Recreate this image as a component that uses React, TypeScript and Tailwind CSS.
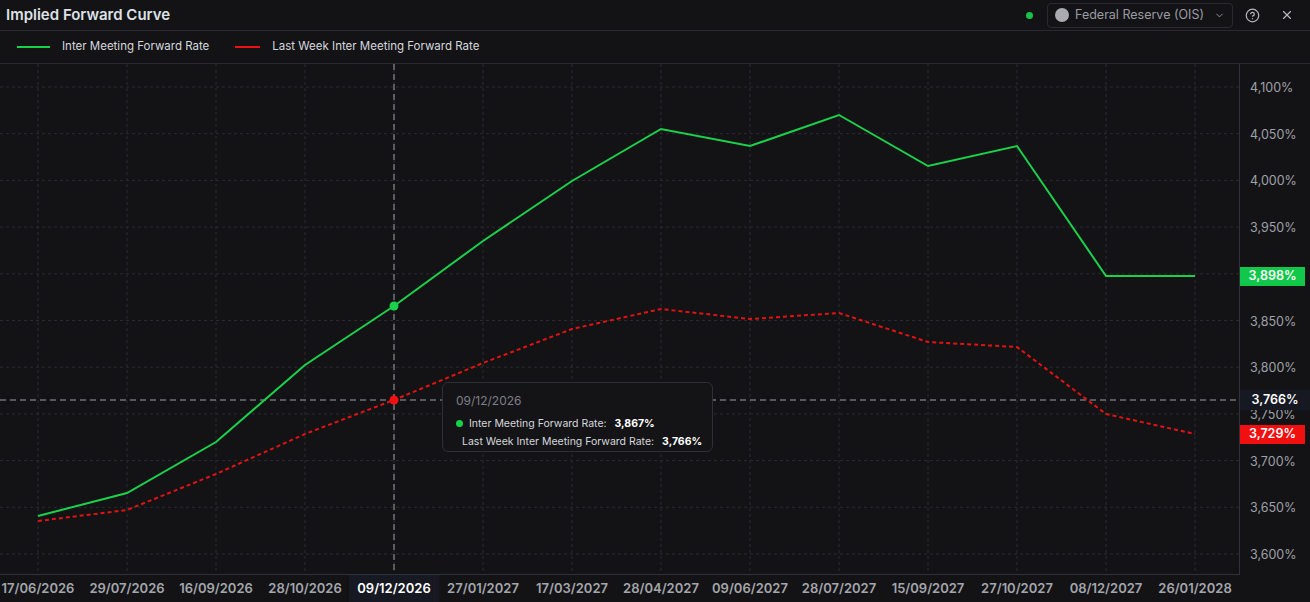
import { ChevronDown, CircleHelp, X } from 'lucide-react'

const dates = ['17/06/2026', '29/07/2026', '16/09/2026', '28/10/2026', '09/12/2026', '27/01/2027', '17/03/2027', '28/04/2027', '09/06/2027', '28/07/2027', '15/09/2027', '27/10/2027', '08/12/2027', '26/01/2028']
const green = [517, 494, 443, 366, 307, 242, 182, 130, 147, 116, 167, 147, 277, 277]
const red = [522, 511, 475, 435, 401, 364, 330, 310, 320, 314, 343, 348, 415, 435]
const ticks = ['4,100%', '4,050%', '4,000%', '3,950%', '3,900%', '3,850%', '3,800%', '3,750%', '3,700%', '3,650%', '3,600%']
const TOP = 65
const xs = (i: number) => 38 + 89 * i
const tickY = (i: number) => 88 + 46.7 * i - TOP
const pts = (arr: number[]) => arr.map((y, i) => `${xs(i)},${y - TOP}`).join(' ')

export default function App() {
  return (
    <div className="flex h-[602px] w-[1310px] flex-col overflow-hidden bg-[#131316] text-[#c9cbd1]" style={{ fontFamily: 'Inter, "Liberation Sans", sans-serif' }}>
      <div className="flex h-[31px] shrink-0 items-center border-b border-[#2a2b30] pl-[6px] pr-[16px]">
        <div className="text-[15px] font-semibold text-[#dfe1e6]">Implied Forward Curve</div>
        <div className="ml-auto flex items-center gap-2">
          <span className="mr-[6px] h-[7px] w-[7px] rounded-full bg-[#16c24a]" />
          <div className="flex h-[25px] items-center gap-[6px] rounded border border-[#2a2b30] px-[7px] text-[12.5px] text-[#9a9ca3]">
            <span className="h-[14px] w-[14px] rounded-full bg-[#a9abb0]" />
            Federal Reserve (OIS)
            <ChevronDown size={11} className="ml-1" />
          </div>
          <CircleHelp size={15} className="ml-1 text-[#b5b7bd]" />
          <X size={14} className="ml-3 text-[#b5b7bd]" />
        </div>
      </div>
      <div className="flex h-[33px] shrink-0 items-center gap-[12px] border-b border-[#2a2b30] pl-[17px] text-[11.5px] text-[#d5d7dc]">
        <span className="h-[2px] w-[33px] bg-[#16d24a]" />
        <span className="mr-[14px]">Inter Meeting Forward Rate</span>
        <span className="h-[2px] w-[25px] bg-[#ee1111]" />
        <span>Last Week Inter Meeting Forward Rate</span>
      </div>
      <div className="relative flex h-[510px] shrink-0">
        <svg width={1240} height={510} className="shrink-0 border-r border-[#2f323a]">
          {dates.map((_, i) => (
            <line key={i} x1={xs(i)} x2={xs(i)} y1={0} y2={510} stroke="#2a2b30" strokeDasharray="3 3" />
          ))}
          {ticks.map((_, i) => (
            <line key={i} x1={0} x2={1240} y1={tickY(i)} y2={tickY(i)} stroke="#2a2b30" strokeDasharray="3 3" />
          ))}
          <line x1={394} x2={394} y1={0} y2={510} stroke="#a0a2a8" strokeDasharray="6 4" />
          <line x1={0} x2={1240} y1={401 - TOP} y2={401 - TOP} stroke="#a0a2a8" strokeDasharray="6 4" />
          <polyline points={pts(red)} fill="none" stroke="#e31212" strokeWidth={2} strokeDasharray="4 3" />
          <polyline points={pts(green)} fill="none" stroke="#1ad14b" strokeWidth={2} />
          <circle cx={394} cy={307 - TOP} r={4.5} fill="#1ad14b" />
          <circle cx={394} cy={401 - TOP} r={4.5} fill="#f01010" />
        </svg>
        <div className="relative flex-1 text-[12.5px] text-[#9fa1a7]">
          {ticks.map((t, i) =>
            i === 4 ? null : (
              <div key={t} className="absolute left-[10px]" style={{ top: tickY(i) - 8 }}>{t}</div>
            )
          )}
          <div className="absolute left-0 top-[203px] flex h-[19px] w-[65px] items-center justify-center bg-[#12c84a] font-semibold text-white">3,898%</div>
          <div className="absolute left-0 top-[326px] flex h-[20px] w-[70px] items-center justify-center bg-[#161922] font-semibold text-white">3,766%</div>
          <div className="absolute left-0 top-[361px] flex h-[19px] w-[65px] items-center justify-center bg-[#f01010] font-semibold text-white">3,729%</div>
        </div>
        <div className="absolute left-[442px] top-[318px] flex h-[70px] w-[271px] flex-col gap-[2px] whitespace-nowrap rounded-md border border-[#2f3036] bg-[#141417] px-[13px] pt-[9px] text-[10.5px]">
          <div className="mb-[4px] text-[12px] text-[#7d7f86]">09/12/2026</div>
          <div className="flex items-center gap-[6px] text-[#d5d7dc]">
            <span className="h-[7px] w-[7px] rounded-full bg-[#16d24a]" />Inter Meeting Forward Rate: <b className="ml-[2px] text-white">3,867%</b>
          </div>
          <div className="flex items-center gap-[6px] text-[#d5d7dc]">
            <span className="h-[7px] w-[7px] rounded-full bg-[#f01010]" />Last Week Inter Meeting Forward Rate: <b className="ml-[2px] text-white">3,766%</b>
          </div>
        </div>
      </div>
      <div className="relative h-[27px] w-[1240px] border-t border-[#2f323a] text-[13px] font-semibold text-[#a4a6ac]">
        {dates.map((d, i) => (
          <div key={d} className={`absolute top-0 flex h-[27px] w-[90px] items-center justify-center ${i === 4 ? 'bg-[#161922] text-white' : ''}`} style={{ left: xs(i) - 45 }}>{d}</div>
        ))}
      </div>
    </div>
  )
}
